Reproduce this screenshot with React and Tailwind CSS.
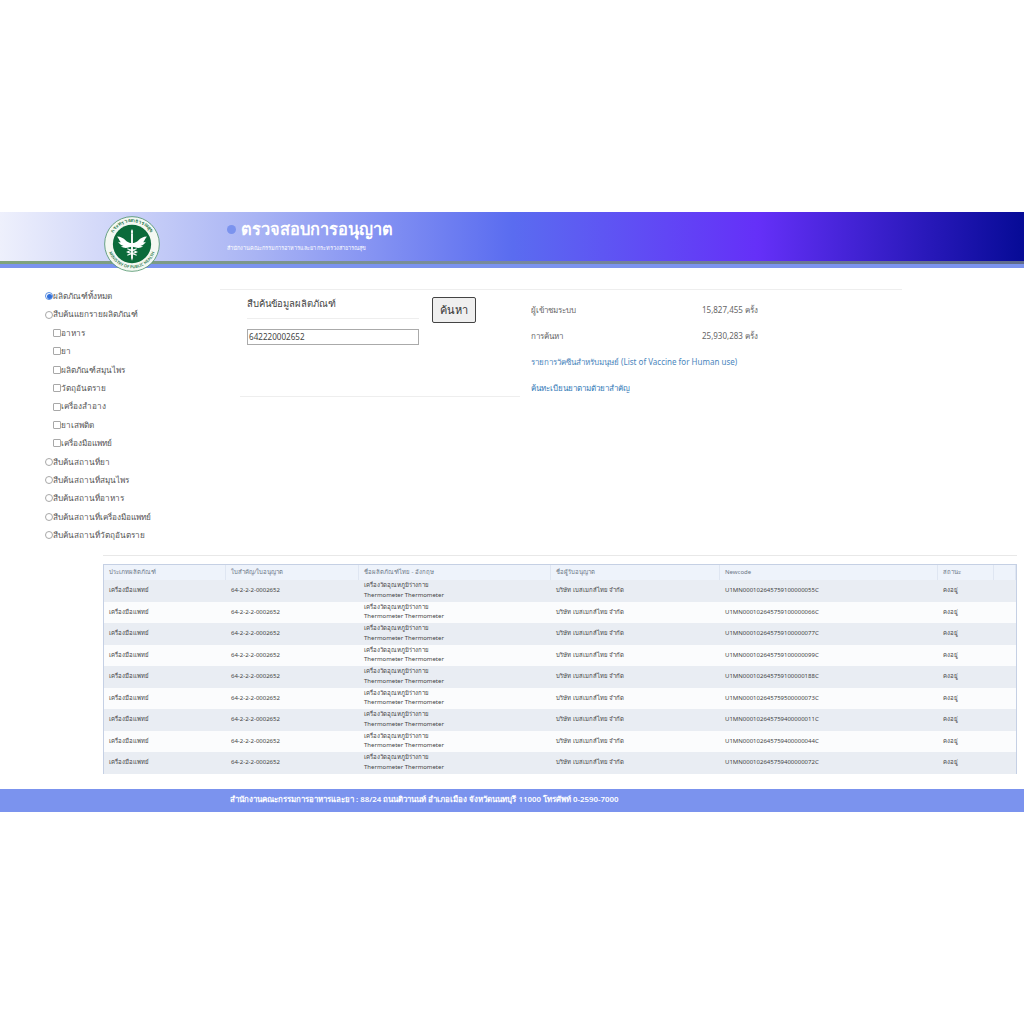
const font = "[font-family:'Noto_Sans','Open_Sans','DejaVu_Sans',sans-serif]";

const subItems = ["อาหาร", "ยา", "ผลิตภัณฑ์สมุนไพร", "วัตถุอันตราย", "เครื่องสำอาง", "ยาเสพติด", "เครื่องมือแพทย์"];
const lowerItems = ["สืบค้นสถานที่ยา", "สืบค้นสถานที่สมุนไพร", "สืบค้นสถานที่อาหาร", "สืบค้นสถานที่เครื่องมือแพทย์", "สืบค้นสถานที่วัตถุอันตราย"];
const codes = ["U1MN000102645759100000055C", "U1MN000102645759100000066C", "U1MN000102645759100000077C", "U1MN000102645759100000099C", "U1MN000102645759100000188C", "U1MN000102645759500000073C", "U1MN000102645759400000011C", "U1MN000102645759400000044C", "U1MN000102645759400000072C"];

function Radio({ checked }) {
  return (
    <span className={`w-[8px] h-[8px] rounded-full border shrink-0 flex items-center justify-center ${checked ? "border-[#5b8fe0]" : "border-[#a8a8a8]"}`}>
      {checked && <span className="w-[5px] h-[5px] rounded-full bg-[#2f6fdb]" />}
    </span>
  );
}

function Row({ kind, checked, label, indent }) {
  return (
    <div className={`h-[18.4px] flex items-center text-[8.200px] text-[#555] ${indent ? "pl-[8px]" : ""}`}>
      {kind === "radio" ? <Radio checked={checked} /> : <span className="w-[8px] h-[8px] border border-[#a8a8a8] rounded-[1px] shrink-0" />}
      <span>{label}</span>
    </div>
  );
}

function Logo() {
  return (
    <svg viewBox="0 0 60 60" className="absolute left-[104px] top-[4px] w-[56px] h-[56px]">
      <circle cx="30" cy="30" r="29.300" fill="#f4f8f2" stroke="#3f8a5e" strokeWidth="0.800" />
      <circle cx="30" cy="30" r="20.500" fill="#0b6b3a" />
      <defs>
        <path id="topArc" d="M6.500 30a23.500 23.500 0 0 1 47 0" />
        <path id="botArc" d="M4 30a26 26 0 0 0 52 0" />
      </defs>
      <text fontSize="5.200" fill="#2c7a50" fontWeight="600" fontFamily="'Noto Sans',sans-serif">
        <textPath href="#topArc" startOffset="50%" textAnchor="middle">กระทรวงสาธารณสุข</textPath>
      </text>
      <text fontSize="4.400" fill="#2c7a50" fontWeight="600" fontFamily="'Noto Sans',sans-serif">
        <textPath href="#botArc" startOffset="50%" textAnchor="middle">MINISTRY OF PUBLIC HEALTH</textPath>
      </text>
      <path d="M30 14c-1.500 2-1.500 4 0 6 1.500-2 1.500-4 0-6z" fill="#fff" />
      <path d="M29 19h2v26l-1 3-1-3z" fill="#fff" />
      <path d="M30 29c-3 0-5-1-7-3-2-2-5-4-9-4 2 2 2 4 4 6-1 0-2 0-3-.5 2 3 4 4 6 4.500-1 .5-2 .5-3 .5 3 2 6 2 9 1 2 0 3-1 3-1s1 1 3 1c3 1 6 1 9-1-1 0-2 0-3-.5 2-.5 4-1.500 6-4.500-1 .5-2 .5-3 .5 2-2 2-4 4-6-4 0-7 2-9 4-2 2-4 3-7 3z" fill="#fff" />
      <path d="M25 35c4 1.500 7 2 10 3.500-3 1.500-6 2-10 3.500M35 35c-4 1.500-7 2-10 3.500 3 1.500 6 2 10 3.500" fill="none" stroke="#fff" strokeWidth="1.200" />
    </svg>
  );
}

const th = "px-[5px] flex items-center text-[6px] text-[#6a7686] border-r border-[#dfe6f2] truncate";
const td = "px-[5px] flex items-center text-[6px] text-[#444] truncate";
const cols = "grid grid-cols-[122px_133px_192px_169px_218px_56px_1fr]";

export default function App() {
  return (
    <div className={`min-h-[1024px] bg-white ${font}`}>
      <div className="h-[212px]" />
      <header className="relative h-[56px]">
        <div className="h-[49px] bg-[linear-gradient(90deg,#eef0fc_0%,#a9b4f4_25%,#5a6cf0_50%,#6530f8_74%,#060b96_100%)] flex flex-col pl-[227px] pt-[7px]">
          <div className="flex items-center gap-[5px] h-[20px]">
            <span className="w-[9px] h-[9px] rounded-full bg-[#7b93ee]" />
            <span className="text-[16.400px] leading-[20px] text-white font-semibold">ตรวจสอบการอนุญาต</span>
          </div>
          <div className="text-[5.600px] leading-[10px] mt-[4px] text-white">สำนักงานคณะกรรมการอาหารและยา กระทรวงสาธารณสุข</div>
        </div>
        <div className="h-[3px] bg-[linear-gradient(90deg,#7fa37c_0%,#76889c_50%,#5f6b8c_100%)]" />
        <div className="h-[4px] bg-[#7b93ee]" />
        <Logo />
      </header>

      <div className="flex h-[287px]">
        <aside className="w-[220px] pl-[45px] pt-[19px] shrink-0">
          <Row kind="radio" checked label="ผลิตภัณฑ์ทั้งหมด" />
          <Row kind="radio" label="สืบค้นแยกรายผลิตภัณฑ์" />
          {subItems.map((s) => <Row key={s} indent kind="check" label={s} />)}
          {lowerItems.map((s) => <Row key={s} kind="radio" label={s} />)}
        </aside>
        <main className="flex-1 pt-[21px]">
          <div className="w-[682px] border-t border-[#eeeeee] flex">
            <div className="w-[300px] pl-[20px]">
              <div className="flex">
                <div className="w-[172px] ml-[7px]">
                  <div className="h-[29px] flex items-center border-b border-[#eeeeee] text-[9.500px] text-[#444]">สืบค้นข้อมูลผลิตภัณฑ์</div>
                  <div className="mt-[10px] h-[16px] border border-[#aaaaaa] flex items-center px-[1px] text-[8.100px] text-[#444]">642220002652</div>
                </div>
                <button className="ml-[13px] mt-[7px] w-[44px] h-[26px] bg-[#efefef] border border-[#444] rounded-[2px] text-[11px] text-[#333] flex items-center justify-center">ค้นหา</button>
              </div>
              <div className="mt-[51px] border-t border-[#eeeeee]" />
            </div>
            <div className="pl-[11px] pt-[7px] text-[8px] text-[#666]">
              <div className="h-[26px] flex items-center"><span className="w-[171px]">ผู้เข้าชมระบบ</span><span>15,827,455 ครั้ง</span></div>
              <div className="h-[26px] flex items-center"><span className="w-[171px]">การค้นหา</span><span>25,930,283 ครั้ง</span></div>
              <div className="h-[26px] flex items-center text-[#4a86bd]">รายการวัคซีนสำหรับมนุษย์ (List of Vaccine for Human use)</div>
              <div className="h-[26px] flex items-center text-[#337ab7]">ค้นทะเบียนยาตามตัวยาสำคัญ</div>
            </div>
          </div>
        </main>
      </div>

      <div className="ml-[103px] mr-[7px] border-t border-[#e8e8e8]" />
      <section className="ml-[103px] mr-[7px] mt-[8px] border-x border-t border-[#c5d0e4]">
        <div className={`${cols} h-[15px] bg-[#eef3fb]`}>
          {["ประเภทผลิตภัณฑ์", "ใบสำคัญ/ใบอนุญาต", "ชื่อผลิตภัณฑ์ไทย - อังกฤษ", "ชื่อผู้รับอนุญาต", "Newcode", "สถานะ", ""].map((h, i) => (
            <div key={i} className={th}>{h}</div>
          ))}
        </div>
        {codes.map((code, i) => (
          <div key={code} className={`${cols} h-[21.5px] ${i % 2 === 0 ? "bg-[#e9edf3]" : "bg-[#fbfcfd]"}`}>
            <div className={td}>เครื่องมือแพทย์</div>
            <div className={td}>64-2-2-2-0002652</div>
            <div className="px-[5px] flex flex-col justify-center text-[6px] leading-[9.300px] text-[#444] overflow-hidden">
              <span>เครื่องวัดอุณหภูมิร่างกาย</span>
              <span>Thermometer Thermometer</span>
            </div>
            <div className={td}>บริษัท เบสเมกส์ไทย จำกัด</div>
            <div className={td}>{code}</div>
            <div className={td}>คงอยู่</div>
            <div />
          </div>
        ))}
      </section>

      <footer className="mt-[15px] h-[23px] bg-[#7b93ee] pl-[230px] flex items-center text-[7.850px] font-semibold text-white">
        สำนักงานคณะกรรมการอาหารและยา : 88/24 ถนนติวานนท์ อำเภอเมือง จังหวัดนนทบุรี 11000 โทรศัพท์ 0-2590-7000
      </footer>
    </div>
  );
}
